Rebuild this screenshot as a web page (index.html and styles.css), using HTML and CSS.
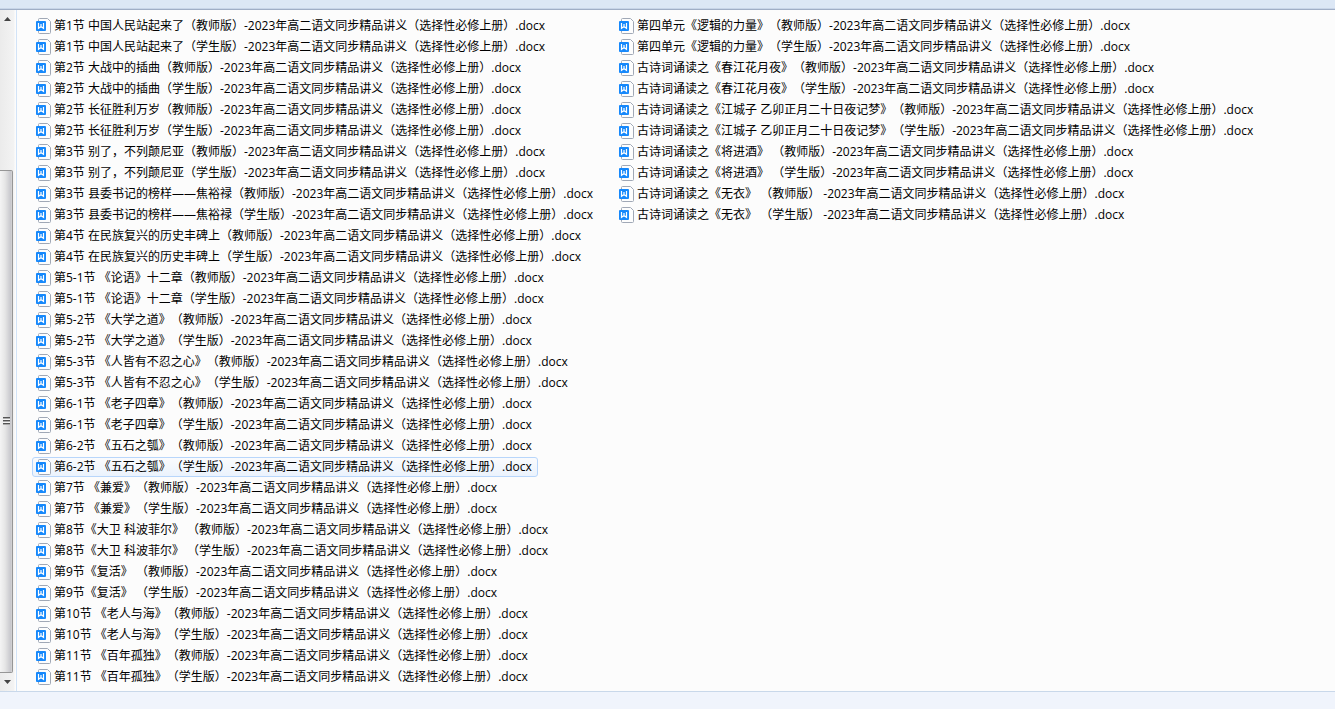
FILE: index.html
```html
<!DOCTYPE html>
<html lang="zh-CN">
<head>
<meta charset="utf-8">
<meta name="viewport" content="width=device-width, initial-scale=1">
<title>高二语文同步精品讲义</title>
<link rel="stylesheet" href="styles.css">
</head>
<body>
<svg class="defs" aria-hidden="true">
  <symbol id="docx" viewBox="0 0 15 16">
    <path d="M3.500 .5H11.500L14.500 3.500V14.500Q14.500 15.500 13.500 15.500H3.500Q2.500 15.500 2.500 14.500V1.500Q2.500 .5 3.500 .5Z" fill="#fdfdfd" stroke="#a0a8b6"/>
    <rect x="0" y="3" width="10" height="10" rx="1" fill="#1688fb"/>
    <path d="M2.500 5V10.300L5 8.500L7.500 10.300V5M5 6V9" fill="none" stroke="#fff" stroke-width="1.200"/>
  </symbol>
</svg>
<header class="topbar"></header>
<main class="pane">
  <div class="scrollbar">
    <button class="arrow" type="button" aria-label="向上滚动"><svg width="7" height="4" viewBox="0 0 7 4"><path d="M0 4L3.500 0L7 4Z" fill="#444"/></svg></button>
    <div class="track">
      <div class="thumb"><span class="grip"></span></div>
    </div>
    <button class="arrow" type="button" aria-label="向下滚动"><svg width="7" height="4" viewBox="0 0 7 4"><path d="M0 0L3.500 4L7 0Z" fill="#444"/></svg></button>
  </div>
  <div class="files" id="files"></div>
</main>
<footer class="statusbar"></footer>
<script src="files.js"></script>
</body>
</html>
```

FILE: styles.css
```css
* { box-sizing: border-box; }

body {
  margin: 0;
  min-height: 100vh;
  display: flex;
  flex-direction: column;
  background: #fcfcfc;
  color: #000;
  font: 12px/20px "Open Sans", "Noto Sans CJK SC", sans-serif;
  text-spacing-trim: space-all;
}

.defs {
  position: absolute;
  width: 0;
  height: 0;
}

.topbar {
  height: 10px;
  background: #dce7f5;
  border-bottom: 1px solid #a0aec6;
  box-shadow: inset 0 -1px #c8d5e8;
}

.pane {
  flex: 1;
  display: flex;
}

.scrollbar {
  width: 17px;
  padding-right: 2px;
  display: flex;
  flex-direction: column;
  background: linear-gradient(to right, #ebebeb, #f3f3f3 14px, #fcfcfc 15px);
  border-right: 1px solid #d2e3f7;
}

.arrow {
  height: 18px;
  padding: 0;
  border: 0;
  background: none;
  display: flex;
  align-items: center;
  justify-content: center;
}

.track {
  flex: 1;
  display: flex;
  flex-direction: column;
  justify-content: flex-end;
}

.thumb {
  height: 78%;
  margin-right: 1px;
  display: flex;
  align-items: center;
  padding-left: 3px;
  border: 1px solid #969696;
  border-left: 0;
  border-radius: 0 2px 2px 0;
  background: linear-gradient(to right, #f4f4f4, #e6e6e6 5px, #c6c6cb 11px, #dadada);
}

.grip {
  width: 7px;
  height: 8px;
  background: repeating-linear-gradient(#555 0 1px, #aaa 1px 2px, #f4f4f4 2px 3px);
}

.files {
  display: flex;
  align-items: flex-start;
  gap: 16px;
  padding: 6px 15px 4px;
}

.column {
  margin: 0;
  padding: 0;
  list-style: none;
  display: grid;
  gap: 1px;
  justify-items: start;
}

.file {
  display: flex;
  align-items: center;
  gap: 3px;
  height: 20px;
  padding: 0 5px 0 3px;
  border: 1px solid transparent;
  border-radius: 3px;
  white-space: pre;
}

.file.hover {
  border-color: #b8d6fb;
  background: linear-gradient(#fafbfd, #ebf3fd);
}

.icon {
  width: 15px;
  height: 16px;
  flex: none;
}

.statusbar {
  height: 18px;
  background: #f0f4fc;
  border-top: 1px solid #c9d8ea;
}
```

FILE: files.js
```js
const TAIL = "-2023年高二语文同步精品讲义（选择性必修上册）.docx";
const EDITIONS = ["（教师版）", "（学生版）"];
const HOVERED = "第6-2节 《五石之瓠》（学生版）";

const COLUMNS = [
  [
    "第1节 中国人民站起来了",
    "第2节 大战中的插曲",
    "第2节 长征胜利万岁",
    "第3节 别了，不列颠尼亚",
    "第3节 县委书记的榜样——焦裕禄",
    "第4节 在民族复兴的历史丰碑上",
    "第5-1节 《论语》十二章",
    "第5-2节 《大学之道》",
    "第5-3节 《人皆有不忍之心》",
    "第6-1节 《老子四章》",
    "第6-2节 《五石之瓠》",
    "第7节 《兼爱》",
    "第8节《大卫 科波菲尔》 ",
    "第9节《复活》 ",
    "第10节 《老人与海》",
    "第11节 《百年孤独》"
  ],
  [
    "第四单元《逻辑的力量》",
    "古诗词诵读之《春江花月夜》",
    "古诗词诵读之《江城子 乙卯正月二十日夜记梦》",
    "古诗词诵读之《将进酒》 ",
    "古诗词诵读之《无衣》 "
  ]
];

const root = document.getElementById("files");
for (const titles of COLUMNS) {
  const list = document.createElement("ul");
  list.className = "column";
  for (const title of titles) {
    for (const edition of EDITIONS) {
      const name = title + edition;
      const space = title.includes("无衣") ? " " : "";
      const item = document.createElement("li");
      item.className = name === HOVERED ? "file hover" : "file";
      item.innerHTML = '<svg class="icon" aria-hidden="true"><use href="#docx"/></svg><span></span>';
      item.lastChild.textContent = name + space + TAIL;
      list.append(item);
    }
  }
  root.append(list);
}
```
